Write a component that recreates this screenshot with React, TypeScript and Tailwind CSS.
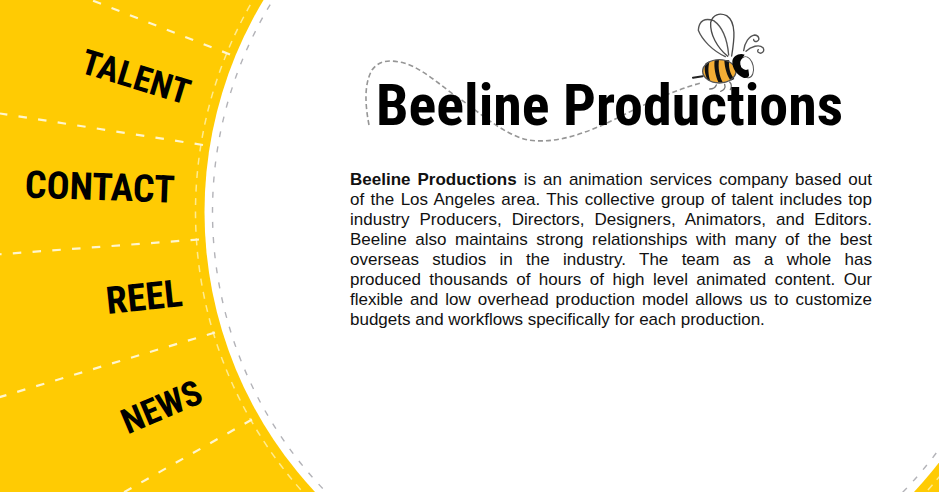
const links = [
  { label: "TALENT", place: "pl-[72px]", turn: "rotate-[17deg] text-[35px]" },
  { label: "CONTACT", place: "pl-0", turn: "rotate-[2deg] text-[38px]" },
  { label: "REEL", place: "pl-[88px]", turn: "rotate-[-6deg] text-[38px]" },
  { label: "NEWS", place: "pl-[124px]", turn: "rotate-[-23deg] text-[35px]" },
];

function Backdrop() {
  return (
    <svg className="absolute inset-0 h-full w-full" aria-hidden="true">
      <circle cx="614.5" cy="212" r="410" fill="#fff" />
      <g fill="none">
        <circle cx="614.5" cy="212" r="402" stroke="#b3b3b8" strokeWidth="1.4" strokeDasharray="6 9.2" />
        <circle cx="614.5" cy="212" r="419" stroke="#ffeb90" strokeWidth="1.5" strokeDasharray="7 6.5" />
        <g stroke="#fff6cf" strokeWidth="2.2" strokeDasharray="8.5 11.3">
          <path d="M230 54.5 76-6" />
          <path d="M203 145 0 113.5" />
          <path d="M199 239.5-10 255" />
          <path d="M215 332.5-10 400" />
          <path d="M252 419.5 105 503" />
        </g>
      </g>
    </svg>
  );
}

function BeeArt() {
  return (
    <svg
      className="pointer-events-none absolute top-0 left-0 h-[160px] w-[510px]"
      viewBox="350 0 510 160"
      fill="none"
      aria-hidden="true"
    >
      <path
        d="M369 125C365 104 364 84 372 70C380 59 392 60 404 63C424 69 442 87 460 99C478 111 502 134 528 140C555 144 583 134 607 123C640 107 670 91 701 83"
        stroke="#969696"
        strokeWidth="1.6"
        strokeDasharray="5 3"
      />
      <g transform="translate(600 0) scale(.3333)" strokeLinecap="round">
        <path d="M279 233 308 229" stroke="#222" strokeWidth="6" />
        <path d="M376 170C336 151 306 119 295 91C297 61 315 53 341 62C369 82 382 119 386 165" stroke="#555" strokeWidth="4" />
        <path d="M383 169C352 143 330 104 332 68C338 42 360 38 380 47C410 67 403 119 395 168" stroke="#4a4a4a" strokeWidth="4" />
        <path d="M431 152C434 128 447 108 464 105C477 106 481 119 471 124C465 126 460 122 461 118" stroke="#555" strokeWidth="4" />
        <path d="M438 154C453 139 478 132 489 143C496 155 484 164 475 157C472 154 473 150 475 149" stroke="#555" strokeWidth="4" />
        <path d="M349 255C346 263 339 267 329 267M374 253C378 264 371 271 362 274M389 246C397 254 394 263 391 269" stroke="#777" strokeWidth="4" />
        <ellipse cx="358" cy="214" rx="50" ry="35" fill="#f4ae35" />
        <path d="M317 190C311 204 315 225 323 240L331 243C325 226 323 203 329 183ZM344 181C341 203 347 229 355 246L369 248C357 226 354 202 357 179ZM373 180C374 205 382 229 392 242L403 237C391 223 384 201 388 181Z" fill="#111" />
        <ellipse cx="358" cy="214" rx="50" ry="35" stroke="#555" strokeWidth="4" />
        <ellipse cx="440" cy="202" rx="20" ry="32" fill="#fff" stroke="#555" strokeWidth="3" transform="rotate(-12 440 202)" />
        <path d="M434 164C417 158 399 168 397 184C396 206 411 226 430 233C441 236 449 230 447 222L445 208L424 202L421 184Z" fill="#050505" />
        <ellipse cx="437" cy="191" rx="16" ry="19" fill="#fff" transform="rotate(-12 437 191)" />
      </g>
    </svg>
  );
}

export default function App() {
  return (
    <div className="relative min-h-screen overflow-hidden bg-[#ffcb03] font-['Liberation_Sans',Arial,sans-serif] text-black">
      <Backdrop />
      <div className="relative flex">
        <nav className="w-[200px] shrink-0 pt-[22px]" aria-label="Main">
          {links.map((link) => (
            <div key={link.label} className={`flex h-[110px] items-center justify-center ${link.place}`}>
              <a
                href={`#${link.label.toLowerCase()}`}
                className={`font-['Roboto_Condensed','DejaVu_Sans_Condensed',sans-serif] leading-none font-bold whitespace-nowrap ${link.turn}`}
              >
                {link.label}
              </a>
            </div>
          ))}
        </nav>
        <main className="min-w-0 flex-1 pr-4 pl-[150px]">
          <header className="relative h-[170px] pt-[71px] pl-[26px]">
            <BeeArt />
            <h1 className="relative font-['Roboto_Condensed','DejaVu_Sans_Condensed',sans-serif] text-[58px] leading-[68px] font-bold whitespace-nowrap">
              Beeline Productions
            </h1>
          </header>
          <p className="max-w-[522px] text-justify text-[17px] leading-5 text-[#111]">
            <strong>Beeline Productions</strong> is an animation services company based out of the Los Angeles area.
            This collective group of talent includes top industry Producers, Directors, Designers, Animators, and
            Editors. Beeline also maintains strong relationships with many of the best overseas studios in the
            industry. The team as a whole has produced&nbsp;thousands of hours of high level animated content. Our
            flexible and low overhead production model allows us to customize budgets&nbsp;and&nbsp;workflows
            specifically for each production.
          </p>
        </main>
      </div>
    </div>
  );
}
